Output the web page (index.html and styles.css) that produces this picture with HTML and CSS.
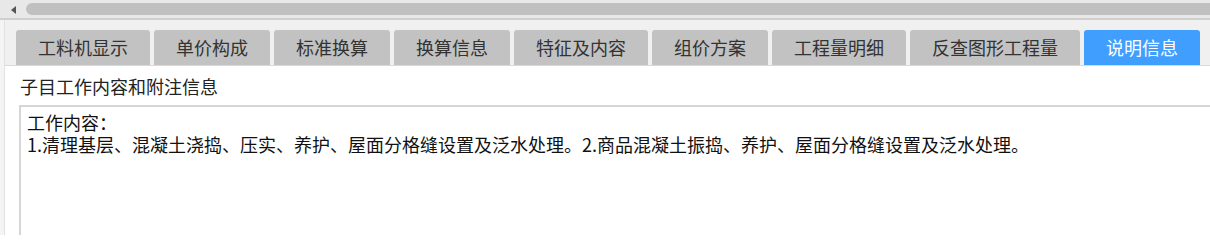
FILE: index.html
```html
<!DOCTYPE html>
<html lang="zh-CN">
<head>
<meta charset="utf-8">
<title>说明信息</title>
<link rel="stylesheet" href="styles.css">
</head>
<body>
<div class="hscroll">
  <span class="arrow"></span>
  <div class="thumb"></div>
</div>
<div class="frame">
  <div class="gutter"></div>
  <div class="main">
    <div class="tabbar">
      <div class="tab">工料机显示</div>
      <div class="tab">单价构成</div>
      <div class="tab">标准换算</div>
      <div class="tab">换算信息</div>
      <div class="tab">特征及内容</div>
      <div class="tab">组价方案</div>
      <div class="tab">工程量明细</div>
      <div class="tab">反查图形工程量</div>
      <div class="tab active">说明信息</div>
    </div>
    <div class="content">
      <div class="label">子目工作内容和附注信息</div>
      <div class="notes">
        <div class="line">工作内容：</div>
        <div class="line">1.清理基层、混凝土浇捣、压实、养护、屋面分格缝设置及泛水处理。2.商品混凝土振捣、养护、屋面分格缝设置及泛水处理。</div>
      </div>
    </div>
  </div>
</div>
</body>
</html>
```

FILE: styles.css
```css
html, body {
  margin: 0;
  padding: 0;
  background: #ffffff;
  overflow: hidden;
  width: 1210px;
  height: 237px;
  font-family: "Noto Sans CJK SC", "Noto Sans", sans-serif;
}

.hscroll {
  height: 20px;
  box-sizing: border-box;
  padding-top: 3px;
  padding-bottom: 3px;
  background: #e8e8e8;
  border-bottom: 2px solid #cfcfcf;
  display: flex;
  align-items: stretch;
}

.arrow {
  width: 0;
  height: 0;
  margin: 3px 10px 0 11px;
  border-top: 4px solid transparent;
  border-bottom: 4px solid transparent;
  border-right: 5px solid #555555;
}

.thumb {
  flex: 1;
  background: #c0c0c0;
  border-radius: 7px 0 0 7px;
}

.frame {
  display: flex;
  height: 215px;
}

.gutter {
  width: 4px;
  background: #f4f4f4;
  border-right: 1px solid #e2e2e2;
  flex: none;
}

.main {
  flex: 1;
  min-width: 0;
  display: flex;
  flex-direction: column;
}

.tabbar {
  background: #f0f0f0;
  padding: 10px 0 0 11px;
  display: flex;
  align-items: flex-end;
  gap: 4px;
  border-bottom: 1px solid #d9d9d9;
}

.tab {
  height: 35px;
  line-height: 35px;
  padding: 0 22px;
  background: #c2c2c2;
  color: #333333;
  font-size: 18px;
  border-radius: 3px 3px 0 0;
  white-space: nowrap;
}

.tab.active {
  background: #409eff;
  color: #ffffff;
}

.content {
  flex: 1;
  padding: 8px 0 0 0;
  display: flex;
  flex-direction: column;
}

.label {
  padding-left: 15px;
  font-size: 18px;
  line-height: 24px;
  color: #222222;
}

.notes {
  margin: 7px -20px 0 14px;
  flex: 1;
  border: 2px solid #d6d6d6;
  border-bottom: none;
  padding: 4px 6px 0 6px;
  font-size: 18px;
  line-height: 22px;
  color: #111111;
}

.line {
  white-space: nowrap;
}
```
